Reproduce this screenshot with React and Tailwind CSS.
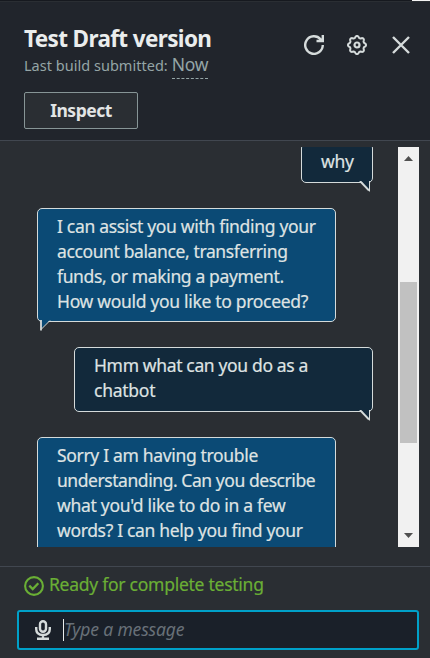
import React from "react";

const LINES = {
  why: [["why", "tracking-[-0.3px]"]],
  assist: [
    ["I can assist you with finding your", "tracking-[-0.32px]"],
    ["account balance, transferring", "tracking-[-0.38px]"],
    ["funds, or making a payment.", "tracking-[-0.36px]"],
    ["How would you like to proceed?", "tracking-[-0.31px]"],
  ],
  hmm: [
    ["Hmm what can you do as a", "tracking-[-0.35px]"],
    ["chatbot", "tracking-[-0.25px]"],
  ],
  sorry: [
    ["Sorry I am having trouble", "tracking-[-0.33px]"],
    ["understanding. Can you describe", "tracking-[-0.44px]"],
    ["what you'd like to do in a few", "tracking-[-0.3px]"],
    ["words? I can help you find your", "tracking-[-0.34px]"],
  ],
};

// Closed outline of a gear with eight rounded teeth, centred in a 20x20 box.
const GEAR_PATH =
  Array.from({ length: 96 }, (_, i) => {
    const a = (i / 96) * Math.PI * 2;
    const wave = Math.cos(8 * a);
    const r = 8.15 + 0.85 * Math.sign(wave) * Math.pow(Math.abs(wave), 0.6);
    return `${i ? "L" : "M"}${(10 + r * Math.cos(a)).toFixed(2)} ${(10 + r * Math.sin(a)).toFixed(2)}`;
  }).join("") + "Z";

function Bubble({ lines, user, className }) {
  return (
    <div
      className={`relative shrink-0 rounded-[5px] border border-[#d5dbdb] px-[19px] pt-[5px] text-[17.5px] leading-[25px] text-[#dfe3e3] [-webkit-text-stroke:0.2px] ${
        user ? "self-end bg-[#12293b]" : "self-start bg-[#0b4a75]"
      } ${className}`}
    >
      {lines.map(([text, tracking]) => (
        <div key={text} className={`whitespace-nowrap ${tracking}`}>
          {text}
        </div>
      ))}
      {user ? (
        <svg className="absolute right-[1px] -bottom-[10px]" width="12" height="11" viewBox="0 0 12 11">
          <path d="M2 0H11V10Z" fill="#12293b" />
          <path d="M1 0L10 9.5" fill="none" stroke="#d5dbdb" strokeWidth="1.9" />
          <path d="M10.5 0V10.5" fill="none" stroke="#d5dbdb" strokeWidth="1" />
        </svg>
      ) : (
        <svg className="absolute left-[2px] -bottom-[10px]" width="11" height="11" viewBox="0 0 11 11">
          <path d="M1 0H10L1 9Z" fill="#0b4a75" />
          <path d="M1 0V10.5" fill="none" stroke="#d5dbdb" strokeWidth="1.8" />
          <path d="M1 9.5L10 0.5" fill="none" stroke="#d5dbdb" strokeWidth="1" />
        </svg>
      )}
    </div>
  );
}

function Header() {
  return (
    <header className="h-[141px] shrink-0 border-b border-[#414750] bg-[#21252c]">
      <div className="flex h-px bg-[#16191f]">
        <div className="ml-auto w-[18px] bg-[#f4f4f4]" />
      </div>
      <div className="h-px bg-[#2a2e33]" />
      <div className="flex justify-between pt-[19px] pr-[19px] pl-6">
        <div>
          <h1 className="h-[32px] text-[22.5px] leading-[35px] font-bold tracking-[-0.63px] whitespace-nowrap text-[#eaeded]">
            Test Draft version
          </h1>
          <div className="flex h-[26px] items-baseline gap-[4px] leading-[22px] whitespace-nowrap text-[#95a5a6]">
            <span className="text-[14.5px] tracking-[0.02px]">Last build submitted:</span>
            <span className="h-[26px] border-b border-dashed border-[#95a5a6] text-[17.5px] tracking-[-0.3px]">Now</span>
          </div>
          <button className="mt-[13px] h-[37px] w-[114px] rounded-[2px] border border-[#879596] bg-[#2a2e33] text-[17.5px] leading-[33px] font-bold tracking-[-0.5px] text-[#e3e5e5]">
            Inspect
          </button>
        </div>
        <div className="flex h-5 gap-[23px] pt-[14px] text-[#d5dbdb]">
          <svg className="shrink-0" width="20" height="20" viewBox="0 0 20 20" fill="none" stroke="currentColor" strokeWidth="2.4">
            <path d="M18.8 10A8.8 8.8 0 1 1 16.6 4.2L18 6M18.8 0V6H12.5" />
          </svg>
          <svg className="shrink-0" width="20" height="20" viewBox="0 0 20 20" fill="none" stroke="currentColor" strokeWidth="2" strokeLinejoin="round">
            <path d={GEAR_PATH} />
            <circle cx="10" cy="10" r="2.5" strokeWidth="2.2" />
          </svg>
          <svg className="ml-[1px] shrink-0" width="20" height="20" viewBox="0 0 20 20" fill="none" stroke="currentColor" strokeWidth="2.4">
            <path d="M2 2L18 18M18 2L2 18" />
          </svg>
        </div>
      </div>
    </header>
  );
}

function Scrollbar() {
  return (
    <div className="flex w-[21px] shrink-0 flex-col items-center bg-[#f1f1f1]">
      <svg className="mt-[9px]" width="9" height="5" viewBox="0 0 9 5">
        <path d="M0 5L4.5 0L9 5Z" fill="#505050" />
      </svg>
      <div className="mt-[121px] h-[161px] w-[17px] bg-[#c1c1c1]" />
      <svg className="mt-auto mb-[9px]" width="9" height="5" viewBox="0 0 9 5">
        <path d="M0 0L4.5 5L9 0Z" fill="#505050" />
      </svg>
    </div>
  );
}

export default function App() {
  return (
    <div className="flex h-[658px] w-[430px] flex-col overflow-hidden bg-[#2a2e33] font-['Noto_Sans',sans-serif]">
      <Header />
      <main className="mt-[6px] flex h-[400px] shrink-0 overflow-hidden pr-[11px]">
        <div className="flex flex-1 flex-col gap-[25px] overflow-hidden pr-[25px] pl-[37px]">
          <Bubble user lines={LINES.why} className="-mt-[4px] h-[40px] w-[72px]" />
          <Bubble lines={LINES.assist} className="h-[114px] w-[299px]" />
          <Bubble user lines={LINES.hmm} className="h-[65px] w-[299px]" />
          <Bubble lines={LINES.sorry} className="h-[140px] w-[299px]" />
        </div>
        <Scrollbar />
      </main>
      <footer className="mt-[19px] flex flex-1 flex-col border-t border-[#414750] pr-[11px] pl-[17px]">
        <div className="mt-[4px] flex h-[26px] items-center gap-[5px] pl-[7px] text-[#6aaf35]">
          <svg className="mt-[4px]" width="20" height="20" viewBox="0 0 20 20" fill="none" stroke="currentColor" strokeWidth="2.1">
            <circle cx="10" cy="10" r="8.9" />
            <path d="M5.3 9.7L8.7 13L14.3 7.2" strokeWidth="2.3" />
          </svg>
          <span className="text-[17.5px] leading-[25px] tracking-[-0.26px] whitespace-nowrap [-webkit-text-stroke:0.2px]">
            Ready for complete testing
          </span>
        </div>
        <div className="mt-[13px] flex h-[40px] items-center rounded-[3px] border-2 border-[#00a1c9] bg-[#1a2029] pl-[16px]">
          <svg width="16" height="20" viewBox="0 0 16 20" fill="none" stroke="#d5dbdb" strokeWidth="2.4">
            <rect x="5" y="1.2" width="6" height="10.6" rx="3" />
            <path d="M1.2 7V9C1.2 13 4 15 8 15S14.8 13 14.8 9V7M8 15V19M2 18.8H14" />
          </svg>
          <div className="ml-[12px] h-[22px] w-px bg-[#eaeded]" />
          <span className="-mt-[2px] text-[17.5px] leading-[25px] tracking-[-0.15px] whitespace-nowrap text-[#687078] italic">
            Type a message
          </span>
        </div>
      </footer>
    </div>
  );
}
